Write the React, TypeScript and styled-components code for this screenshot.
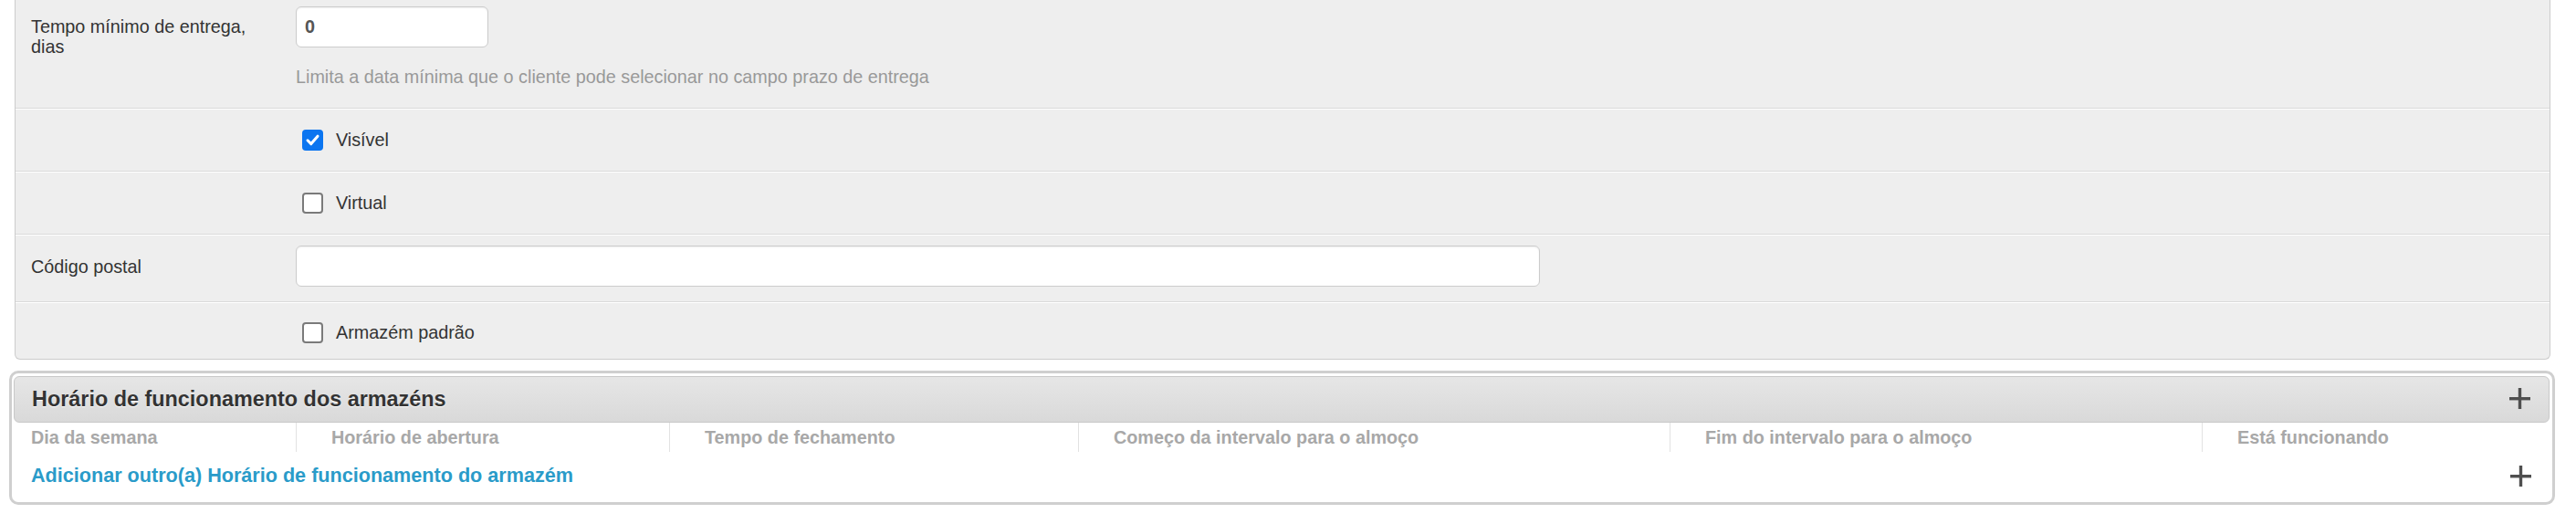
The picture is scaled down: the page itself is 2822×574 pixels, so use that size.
import React from 'react';
import styled, { createGlobalStyle } from 'styled-components';

const GlobalStyle = createGlobalStyle`
  body {
    margin: 0;
    background: #ffffff;
    font-family: "Liberation Sans", Arial, Helvetica, sans-serif;
    color: #333333;
  }
`;

const Page = styled.div`
  padding: 0 23px 40px 10px;
`;

const FormPanel = styled.div`
  margin: 0 5px 0 6px;
  background: #eeeeee;
  border: 1px solid #cccccc;
  border-top: none;
  border-radius: 0 0 6px 6px;
`;

const FieldRow = styled.div<{ $pad: string }>`
  display: grid;
  grid-template-columns: 290px 1fr;
  padding: ${p => p.$pad};
  padding-left: 17px;
  border-top: 1px solid #ffffff;
  border-bottom: 1px solid #dadada;
  &:first-child { border-top: none; }
  &:last-child { border-bottom: none; }
`;

const Label = styled.label<{ $top?: number }>`
  font-size: 19.8px;
  line-height: 22px;
  padding-top: ${p => p.$top ?? 11}px;
  padding-right: 20px;
  color: #333;
`;

const Controls = styled.div`
  display: flex;
  flex-direction: column;
  align-items: flex-start;
`;

const TextInput = styled.input<{ $w: number }>`
  box-sizing: border-box;
  width: ${p => p.$w}px;
  height: 45px;
  padding: 0 9px;
  border: 1px solid #cccccc;
  border-radius: 6px;
  background: #ffffff;
  box-shadow: inset 0 1px 2px rgba(0, 0, 0, 0.07);
  font-family: inherit;
  font-size: 19.8px;
  font-weight: bold;
  color: #555;
  outline: none;
`;

const Help = styled.div`
  margin-top: 21px;
  font-size: 19.8px;
  line-height: 22px;
  color: #999999;
`;

const CheckLine = styled.label`
  display: flex;
  align-items: center;
  gap: 14px;
  height: 23px;
  padding-left: 7px;
  font-size: 19.8px;
  color: #333;
`;

const Box = styled.span<{ $on?: boolean }>`
  box-sizing: border-box;
  width: 23px;
  height: 23px;
  border-radius: 4px;
  border: ${p => (p.$on ? 'none' : '2px solid #7a7a7a')};
  background: ${p => (p.$on ? '#0b75f0' : '#ffffff')};
  display: flex;
  align-items: center;
  justify-content: center;
`;

const Checkbox = ({ checked, label }: { checked?: boolean; label: string }) => (
  <CheckLine>
    <Box $on={checked}>
      {checked && (
        <svg width="17" height="17" viewBox="0 0 17 17">
          <path d="M3 8.8 L6.8 12.6 L14 4.2" fill="none" stroke="#fff" strokeWidth="3" strokeLinecap="round" strokeLinejoin="round" />
        </svg>
      )}
    </Box>
    {label}
  </CheckLine>
);

const HoursPanel = styled.div`
  margin-top: 12px;
  border: 3px solid #cfcfcf;
  border-radius: 10px;
  padding: 3px 3px 3px 2px;
  background: #ffffff;
`;

const HoursHeader = styled.div`
  display: flex;
  align-items: center;
  justify-content: space-between;
  height: 49px;
  padding: 0 20px 0 19px;
  border: 1px solid #c8c8c8;
  border-radius: 6px;
  background: linear-gradient(#e6e6e6, #d9d9d9);
`;

const Title = styled.h3`
  margin: 0;
  font-size: 23.4px;
  font-weight: bold;
  color: #333;
  text-shadow: 0 1px 0 #ffffff;
`;

const ColumnRow = styled.div`
  display: grid;
  grid-template-columns: 309px 409px 448px 648px 583px 1fr;
  height: 32px;
`;

const ColumnHead = styled.div<{ $first?: boolean }>`
  display: flex;
  align-items: center;
  padding-left: ${p => (p.$first ? 19 : 38)}px;
  border-left: ${p => (p.$first ? 'none' : '1px solid #e2e2e2')};
  font-size: 19.8px;
  font-weight: bold;
  color: #a8a8a8;
  white-space: nowrap;
`;

const AddRow = styled.div`
  display: flex;
  align-items: center;
  justify-content: space-between;
  height: 52px;
  padding: 0 20px 0 19px;
`;

const AddLink = styled.a`
  font-size: 21.6px;
  font-weight: bold;
  color: #2a9bc9;
  text-decoration: none;
`;

const PlusBtn = styled.span<{ $dy?: number }>`
  display: flex;
  margin-top: ${p => p.$dy ?? 0}px;
`;

const Plus = ({ dy }: { dy?: number }) => (
  <PlusBtn $dy={dy}>
    <svg width="23" height="23" viewBox="0 0 23 23">
      <rect x="0" y="10" width="23" height="3.4" fill="#4f4f4f" />
      <rect x="9.8" y="0" width="3.4" height="23" fill="#4f4f4f" />
    </svg>
  </PlusBtn>
);

const columns = [
  'Dia da semana',
  'Horário de abertura',
  'Tempo de fechamento',
  'Começo da intervalo para o almoço',
  'Fim do intervalo para o almoço',
  'Está funcionando',
];

export default function App() {
  return (
    <Page>
      <GlobalStyle />
      <FormPanel>
        <FieldRow $pad="7px 0 23px">
          <Label>Tempo mínimo de entrega, dias</Label>
          <Controls>
            <TextInput $w={211} defaultValue="0" />
            <Help>Limita a data mínima que o cliente pode selecionar no campo prazo de entrega</Help>
          </Controls>
        </FieldRow>
        <FieldRow $pad="22px 0 22px">
          <span />
          <Checkbox checked label="Visível" />
        </FieldRow>
        <FieldRow $pad="22px 0 22px">
          <span />
          <Checkbox label="Virtual" />
        </FieldRow>
        <FieldRow $pad="11px 0 16px">
          <Label $top={12}>Código postal</Label>
          <Controls>
            <TextInput $w={1363} />
          </Controls>
        </FieldRow>
        <FieldRow $pad="21px 0 17px">
          <span />
          <Checkbox label="Armazém padrão" />
        </FieldRow>
      </FormPanel>

      <HoursPanel>
        <HoursHeader>
          <Title>Horário de funcionamento dos armazéns</Title>
          <Plus dy={-2} />
        </HoursHeader>
        <ColumnRow>
          {columns.map((c, i) => (
            <ColumnHead key={c} $first={i === 0}>{c}</ColumnHead>
          ))}
        </ColumnRow>
        <AddRow>
          <AddLink href="#">Adicionar outro(a) Horário de funcionamento do armazém</AddLink>
          <Plus dy={0} />
        </AddRow>
      </HoursPanel>
    </Page>
  );
}
